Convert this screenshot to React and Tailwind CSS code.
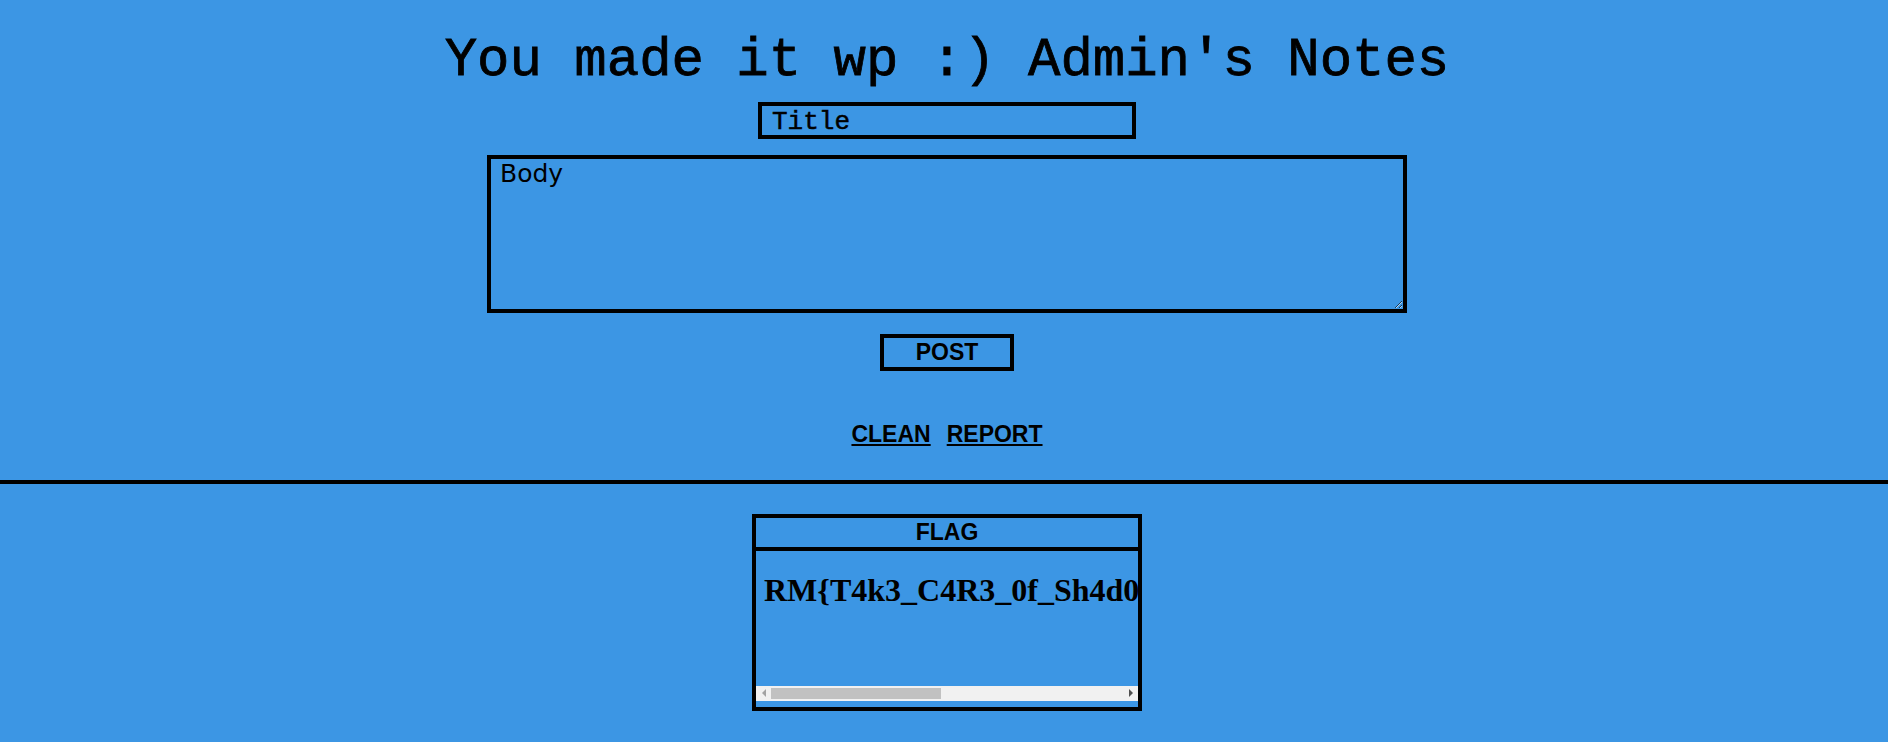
export default function App() {
  return (
    <div className="min-h-screen bg-[#3c96e4] text-black">
      <div className="flex flex-col items-center pl-[6px]">
        <h1 className="mt-[30px] text-[54px] leading-[61px] font-normal font-['Liberation_Mono',monospace] [-webkit-text-stroke:0.8px_black]">
          You made it wp :) Admin's Notes
        </h1>

        {/* New note */}
        <form className="flex flex-col items-center" onSubmit={(e) => e.preventDefault()}>
          <input
            type="text"
            placeholder="Title"
            className="mt-[11px] h-[37px] w-[378px] border-4 border-black bg-transparent px-[10px] pt-[3px] text-[26px] font-['Liberation_Mono',monospace] placeholder:text-black outline-none [-webkit-text-stroke:0.5px_black]"
          />
          <textarea
            placeholder="Body"
            className="mt-[16px] h-[158px] w-[920px] border-4 border-black bg-transparent px-[9px] pt-0 text-[25px] leading-[29px] font-['DejaVu_Sans',sans-serif] placeholder:text-black outline-none"
          />
          <button
            type="submit"
            className="mt-[21px] h-[37px] w-[134px] border-4 border-black bg-transparent text-[23px] font-bold leading-none font-['Liberation_Sans',Arial,sans-serif]"
          >
            POST
          </button>
        </form>

        <div className="mt-[46px] flex gap-[16px] text-[23px] font-bold font-['Liberation_Sans',Arial,sans-serif]">
          <a href="#" className="underline">CLEAN</a>
          <a href="#" className="underline">REPORT</a>
        </div>
      </div>

      <hr className="mt-[28px] border-0 border-t-4 border-black" />

      {/* Flag */}
      <div className="flex justify-center pl-[6px]">
        <div className="mt-[30px] w-[390px] border-4 border-black">
          <div className="h-[33px] border-b-4 border-black text-center text-[23px] font-bold leading-[29px] font-['Liberation_Sans',Arial,sans-serif]">
            FLAG
          </div>
          <div className="h-[135px] overflow-hidden">
            <h1 className="mt-[21px] whitespace-nowrap pl-[8px] text-[32px] font-bold leading-[normal] font-['Liberation_Serif',serif]">
              RM{"{"}T4k3_C4R3_0f_Sh4d0w_D0M_4nd_1ts_c00k13s_pl5{"}"}
            </h1>
          </div>
          {/* horizontal scrollbar */}
          <div className="mb-[6px] flex h-[15px] items-center bg-[#f1f1f1]">
            <div className="flex w-[15px] justify-center">
              <div className="h-0 w-0 border-y-[4px] border-r-[4px] border-y-transparent border-r-[#a3a3a3]" />
            </div>
            <div className="h-[11px] w-[170px] bg-[#c1c1c1]" />
            <div className="flex-1" />
            <div className="flex w-[15px] justify-center">
              <div className="h-0 w-0 border-y-[4px] border-l-[4px] border-y-transparent border-l-[#505050]" />
            </div>
          </div>
        </div>
      </div>
    </div>
  );
}
